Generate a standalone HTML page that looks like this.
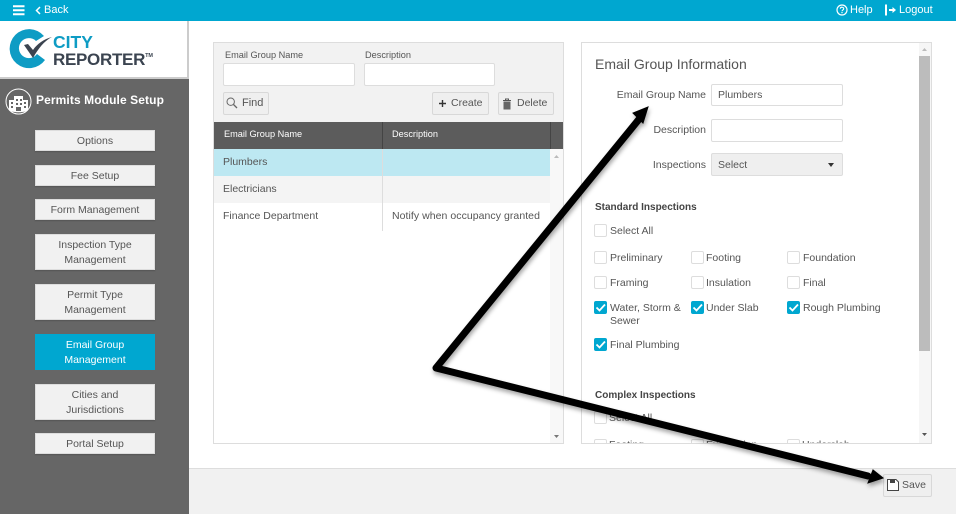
<!DOCTYPE html>
<html>
<head>
<meta charset="utf-8">
<style>
html,body{margin:0;padding:0;width:956px;height:514px;overflow:hidden;background:#fff;font-family:"Liberation Sans",sans-serif;color:#555;font-size:11px}
div,span{position:absolute;box-sizing:border-box;white-space:nowrap}
.nav{left:35px;width:120px;background:#f1f1f1;border:1px solid #ddd;box-shadow:0 1px 1px #555;color:#555;text-align:center;font-size:10.5px;line-height:15px;display:flex;align-items:center;justify-content:center;white-space:normal;padding-top:2px}
.input{background:#fff;border:1px solid #ddd;border-radius:2px}
.btn{background:#efefef;border:1px solid #d8d8d8;border-radius:2px;height:23px;font-size:10.5px;line-height:21px;color:#555}
.t{font-size:10.5px;line-height:13px;color:#555;margin-top:1px}
.s{font-size:9.2px}
.cb{width:13px;height:13px;background:#fff;border:1px solid #ddd;border-radius:2px}
.on{background:#00a7d0;border-color:#00a7d0}
.on svg{position:absolute;left:0;top:0}
.b{font-weight:bold;color:#444;font-size:10px;margin-top:1px}
.top{color:#fff;font-size:11px;line-height:14px;top:3px}
</style>
</head>
<body>
<!-- top bar -->
<div style="left:0;top:0;width:956px;height:21px;background:#00a7d0"></div>
<svg style="position:absolute;left:13px;top:5px" width="13" height="11"><path d="M0 1.2H11.5M0 5.2H11.5M0 9.2H11.5" stroke="#fff" stroke-width="2"/></svg>
<svg style="position:absolute;left:35px;top:6px" width="7" height="9"><path d="M5 1L1.5 4.5L5 8" stroke="#fff" stroke-width="1.5" fill="none"/></svg>
<div class="top" style="left:44px">Back</div>
<svg style="position:absolute;left:836px;top:4px" width="12" height="12"><circle cx="6" cy="6" r="5" stroke="#fff" stroke-width="1.2" fill="none"/><path d="M4.3 4.7C4.4 2.7 7.8 2.8 7.7 4.7C7.7 5.9 6 5.9 6 7.2" stroke="#fff" stroke-width="1.1" fill="none"/><rect x="5.4" y="8" width="1.2" height="1.2" fill="#fff"/></svg>
<div class="top" style="left:850px">Help</div>
<svg style="position:absolute;left:884px;top:4px" width="13" height="12"><path d="M2 .5V11.5" stroke="#fff" stroke-width="2"/><path d="M5 6H9" stroke="#fff" stroke-width="2"/><path d="M8.5 3L12 6L8.5 9Z" fill="#fff"/></svg>
<div class="top" style="left:899px">Logout</div>

<!-- sidebar -->
<div style="left:0;top:21px;width:189px;height:58px;background:#fff;border-right:2px solid #ccc;border-bottom:2px solid #ccc"></div>
<svg style="position:absolute;left:0;top:21px" width="60" height="58" viewBox="0 21 60 58">
<path d="M44 36A19.5 19.5 0 1 0 45 60L37 54A10 10 0 1 1 36 41Z" fill="#0e9cc4"/>
<path d="M24 45L28 44L33 50C37 44 44 39 52 37C44 41 38 49 33 58Z" fill="#3b4450"/>
</svg>
<div style="left:53px;top:34px;color:#0e9cc4;font-weight:bold;font-size:17.5px;line-height:16px">CITY</div>
<div style="left:53px;top:48px;color:#3b4450;font-weight:bold;font-size:17px;line-height:17px;letter-spacing:-.3px">REPORTER<span style="position:static;font-size:5.5px;vertical-align:8px;letter-spacing:0">TM</span></div>

<div style="left:0;top:79px;width:189px;height:435px;background:#666"></div>
<svg style="position:absolute;left:5px;top:88px" width="27" height="27" viewBox="0 0 27 27">
<circle cx="13.5" cy="13.5" r="12.5" fill="#666" stroke="#fff" stroke-width="1"/>
<path d="M4 12H9V8H18V12H23V22C20 25 7 25 4 22Z" fill="#fff"/>
<path d="M6 14h2v2H6zM6 18h2v2H6zM11 11h2v2h-2zM15 11h2v2h-2zM11 15h2v2h-2zM15 15h2v2h-2zM11 19h5v4h-5zM19 14h2v2h-2zM19 18h2v2h-2z" fill="#666"/>
</svg>
<div style="left:36px;top:92px;color:#fff;font-weight:bold;font-size:12px;line-height:16px;letter-spacing:.1px">Permits Module Setup</div>

<div class="nav" style="top:130px;height:21px">Options</div>
<div class="nav" style="top:165px;height:21px">Fee Setup</div>
<div class="nav" style="top:199px;height:21px">Form Management</div>
<div class="nav" style="top:234px;height:36px"><span style="position:static">Inspection Type<br>Management</span></div>
<div class="nav" style="top:284px;height:36px"><span style="position:static">Permit Type<br>Management</span></div>
<div class="nav" style="top:334px;height:36px;background:#00a7d0;border-color:#00a7d0;color:#fff;box-shadow:none"><span style="position:static">Email Group<br>Management</span></div>
<div class="nav" style="top:384px;height:36px"><span style="position:static">Cities and<br>Jurisdictions</span></div>
<div class="nav" style="top:433px;height:21px">Portal Setup</div>

<!-- left panel -->
<div style="left:213px;top:42px;width:351px;height:402px;background:#fff;border:1px solid #ddd"></div>
<div style="left:214px;top:43px;width:349px;height:79px;background:#f2f2f2"></div>
<div class="t s" style="left:225px;top:48px">Email Group Name</div>
<div class="t s" style="left:365px;top:48px">Description</div>
<div class="input" style="left:223px;top:63px;width:132px;height:23px"></div>
<div class="input" style="left:364px;top:63px;width:131px;height:23px"></div>
<div class="btn" style="left:223px;top:92px;width:46px"></div>
<svg style="position:absolute;left:226px;top:97px" width="12" height="12"><circle cx="4.7" cy="4.7" r="3.7" stroke="#666" fill="none"/><path d="M7.5 7.5L11 11" stroke="#666" stroke-width="1.3"/></svg>
<div class="t" style="left:242px;top:96px;font-size:11px">Find</div>
<div class="btn" style="left:432px;top:92px;width:57px"></div>
<svg style="position:absolute;left:438px;top:99px" width="9" height="9"><path d="M4.5 1V8M1 4.5H8" stroke="#333" stroke-width="1.4"/></svg>
<div class="t" style="left:451px;top:96px">Create</div>
<div class="btn" style="left:498px;top:92px;width:56px"></div>
<svg style="position:absolute;left:502px;top:98px" width="10" height="12"><path d="M1 2.5H9M3.5 2V1H6.5V2" stroke="#555" fill="none"/><path d="M1.5 3.5H8.5V11.5H1.5Z" fill="#666"/></svg>
<div class="t" style="left:517px;top:96px">Delete</div>

<div style="left:214px;top:122px;width:349px;height:27px;background:#5c5c5c"></div>
<div class="t s" style="left:224px;top:127px;color:#fff">Email Group Name</div>
<div class="t s" style="left:392px;top:127px;color:#fff">Description</div>
<div style="left:382px;top:122px;width:1px;height:27px;background:#444"></div>
<div style="left:550px;top:122px;width:1px;height:27px;background:#444"></div>
<div style="left:214px;top:149px;width:336px;height:27px;background:#bde8f2"></div>
<div style="left:214px;top:176px;width:336px;height:27px;background:#f4f4f4"></div>
<div style="left:382px;top:149px;width:1px;height:82px;background:#ddd"></div>
<div class="t" style="left:223px;top:155px">Plumbers</div>
<div class="t" style="left:223px;top:182px">Electricians</div>
<div class="t" style="left:223px;top:209px">Finance Department</div>
<div class="t" style="left:392px;top:209px;letter-spacing:.05px">Notify when occupancy granted</div>
<div style="left:550px;top:149px;width:13px;height:294px;background:#f8f8f8"></div>
<svg style="position:absolute;left:553px;top:154px" width="7" height="5"><path d="M3.5 1L6 4H1Z" fill="#bbb"/></svg>
<svg style="position:absolute;left:553px;top:434px" width="7" height="5"><path d="M1 1H6L3.5 4Z" fill="#777"/></svg>

<!-- right panel -->
<div style="left:581px;top:42px;width:351px;height:402px;background:#fff;border:1px solid #ddd;overflow:hidden">
  <div style="left:337px;top:0;width:12px;height:400px;background:#f6f6f6"></div>
  <div style="left:337px;top:13px;width:11px;height:295px;background:#bcbcbc"></div>
  <svg style="position:absolute;left:339px;top:4px" width="7" height="5"><path d="M3.5 1L6 4H1Z" fill="#bbb"/></svg>
  <svg style="position:absolute;left:339px;top:389px" width="7" height="5"><path d="M1 1H6L3.5 4Z" fill="#555"/></svg>
  <div class="cb" style="left:12px;top:368px"></div>
  <div class="t" style="left:27px;top:368px">Select All</div>
  <div class="cb" style="left:12px;top:396px"></div>
  <div class="t" style="left:27px;top:395px">Footing</div>
  <div class="cb" style="left:109px;top:396px"></div>
  <div class="t" style="left:124px;top:395px">Excavation</div>
  <div class="cb" style="left:205px;top:396px"></div>
  <div class="t" style="left:220px;top:395px">Underslab</div>
</div>
<div style="left:595px;top:55px;font-size:14px;line-height:18px;color:#555">Email Group Information</div>
<div class="t" style="right:250px;top:88px">Email Group Name</div>
<div class="t" style="right:250px;top:123px">Description</div>
<div class="t" style="right:250px;top:158px">Inspections</div>
<div class="input" style="left:711px;top:84px;width:132px;height:22px"></div>
<div class="t" style="left:718px;top:88px">Plumbers</div>
<div class="input" style="left:711px;top:119px;width:132px;height:23px"></div>
<div style="left:711px;top:153px;width:132px;height:23px;background:#efefef;border:1px solid #ddd;border-radius:2px"></div>
<div class="t" style="left:718px;top:158px">Select</div>
<svg style="position:absolute;left:827px;top:162px" width="8" height="6"><path d="M1 1H7L4 5Z" fill="#333"/></svg>

<div class="b" style="left:595px;top:200px;line-height:13px">Standard Inspections</div>
<div class="cb" style="left:594px;top:224px"></div><div class="t" style="left:610px;top:224px">Select All</div>
<div class="cb" style="left:594px;top:251px"></div><div class="t" style="left:610px;top:251px">Preliminary</div>
<div class="cb" style="left:691px;top:251px"></div><div class="t" style="left:706px;top:251px">Footing</div>
<div class="cb" style="left:787px;top:251px"></div><div class="t" style="left:803px;top:251px">Foundation</div>
<div class="cb" style="left:594px;top:276px"></div><div class="t" style="left:610px;top:276px">Framing</div>
<div class="cb" style="left:691px;top:276px"></div><div class="t" style="left:706px;top:276px">Insulation</div>
<div class="cb" style="left:787px;top:276px"></div><div class="t" style="left:803px;top:276px">Final</div>
<div class="cb on" style="left:594px;top:301px"><svg width="11" height="11"><path d="M1.5 5.5L4.5 8.5L10 2.5" stroke="#fff" stroke-width="1.8" fill="none"/></svg></div>
<div class="t" style="left:610px;top:301px">Water, Storm &amp;<br>Sewer</div>
<div class="cb on" style="left:691px;top:301px"><svg width="11" height="11"><path d="M1.5 5.5L4.5 8.5L10 2.5" stroke="#fff" stroke-width="1.8" fill="none"/></svg></div>
<div class="t" style="left:706px;top:301px">Under Slab</div>
<div class="cb on" style="left:787px;top:301px"><svg width="11" height="11"><path d="M1.5 5.5L4.5 8.5L10 2.5" stroke="#fff" stroke-width="1.8" fill="none"/></svg></div>
<div class="t" style="left:803px;top:301px">Rough Plumbing</div>
<div class="cb on" style="left:594px;top:338px"><svg width="11" height="11"><path d="M1.5 5.5L4.5 8.5L10 2.5" stroke="#fff" stroke-width="1.8" fill="none"/></svg></div>
<div class="t" style="left:610px;top:338px">Final Plumbing</div>
<div class="b" style="left:595px;top:388px;line-height:13px">Complex Inspections</div>

<!-- footer -->
<div style="left:189px;top:468px;width:767px;height:46px;background:#f1f1f1;border-top:1px solid #ddd"></div>
<div class="btn" style="left:883px;top:474px;width:49px;height:23px"></div>
<svg style="position:absolute;left:887px;top:479px" width="12" height="12"><path d="M.5.5H9L11.5 3V11.5H.5Z" fill="#fff" stroke="#444"/><path d="M3 1H8V4H3Z" fill="#444"/></svg>
<div class="t" style="left:902px;top:478px">Save</div>

<!-- arrows -->
<svg style="position:absolute;left:0;top:0;filter:drop-shadow(1px 3px 2px rgba(0,0,0,.35))" width="956" height="514">
<path d="M640 118L436 368L868 476" stroke="#000" stroke-width="7" fill="none" stroke-linejoin="round" stroke-linecap="round"/>
<path d="M648 107L643 123L633 113Z" fill="#000" stroke="#000" stroke-width="1"/>
<path d="M883 478L868 483L873 470Z" fill="#000" stroke="#000" stroke-width="1"/>
</svg>
</body>
</html>
